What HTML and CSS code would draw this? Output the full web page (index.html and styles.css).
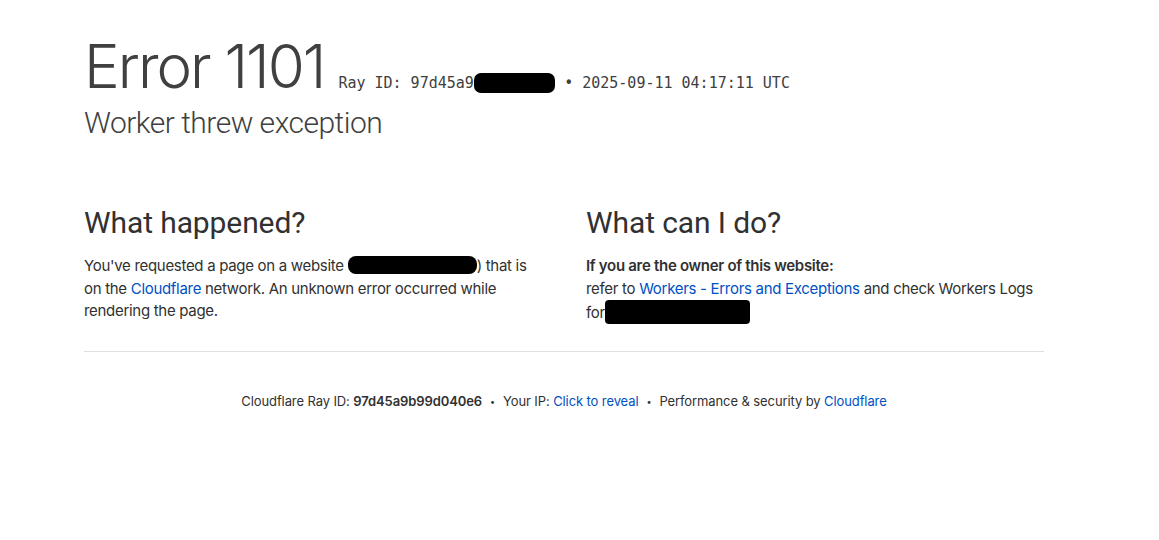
FILE: index.html
```html
<!DOCTYPE html>
<html lang="en">
<head>
<meta charset="utf-8">
<title>Worker threw exception | Cloudflare</title>
<link rel="stylesheet" href="styles.css">
</head>
<body>
<div class="wrapper">
  <header class="header">
    <h1 class="title">Error 1101</h1><span class="ray">Ray ID: 97d45a9<span class="redact-mono">b99d040e6</span> • 2025-09-11 04:17:11 UTC</span>
    <h2 class="subtitle">Worker threw exception</h2>
  </header>

  <section class="columns">
    <div class="col col-left">
      <h2 class="col-title">What happened?</h2>
      <p class="text">You've requested a page on a website <span class="redact redact-small" aria-label="redacted"></span>) that is on the <a class="link" href="#">Cloudflare</a> network. An unknown error occurred while rendering the page.</p>
    </div>
    <div class="col col-right">
      <h2 class="col-title">What can I do?</h2>
      <p class="text"><strong class="strong">If you are the owner of this website:</strong><br>refer to <a class="link" href="#">Workers - Errors and Exceptions</a> and check Workers Logs for<span class="redact redact-big" aria-label="redacted"></span></p>
    </div>
  </section>

  <footer class="footer">
    <p class="footer-text">Cloudflare Ray ID: <strong class="ray-bold">97d45a9b99d040e6</strong><span class="sep">•</span>Your IP: <a class="link" href="#">Click to reveal</a><span class="sep">•</span>Performance &amp; security by <a class="link" href="#">Cloudflare</a></p>
  </footer>
</div>
</body>
</html>
```

FILE: styles.css
```css
* { box-sizing: border-box; }

html, body {
  margin: 0;
  padding: 0;
  background: #ffffff;
}

body {
  font-family: Inter, Roboto, "Noto Sans", "Liberation Sans", sans-serif;
  color: #313131;
}

.wrapper {
  width: 960px;
  margin-left: 84px;
  padding-top: 29px;
}

.header {
  margin: 0;
}

.title {
  display: inline-block;
  margin: 0 14px 0 0;
  font-size: 60px;
  font-weight: 300;
  line-height: 75px;
  letter-spacing: -2px;
  color: #404040;
}

.ray {
  display: inline-block;
  font-family: "DejaVu Sans Mono", "Liberation Mono", monospace;
  font-size: 15px;
  color: #404040;
}

.redact-mono {
  background: #000;
  color: #000;
  border-radius: 7px;
  padding: 1px 0;
}

.subtitle {
  margin: 0;
  font-family: Roboto, Inter, sans-serif;
  font-size: 30px;
  font-weight: 300;
  line-height: 37.5px;
  letter-spacing: -0.5px;
  color: #404040;
}

.columns {
  display: grid;
  grid-template-columns: 480px 480px;
  margin-top: 62px;
  padding-bottom: 26px;
  border-bottom: 1px solid #e0e0e0;
}

.col-left { padding-right: 22px; }
.col-right { padding-left: 22px; }

.col-title {
  margin: 0 0 14px 0;
  font-family: Roboto, Inter, sans-serif;
  font-size: 30px;
  font-weight: 400;
  line-height: 37.5px;
  letter-spacing: -0.1px;
  color: #313131;
}

.text {
  margin: 0;
  font-size: 15px;
  line-height: 22.5px;
  letter-spacing: -0.3px;
  color: #313131;
}

.strong { font-weight: 600; }

.link {
  color: #0051c3;
  text-decoration: none;
}

.redact {
  display: inline-block;
  background: #000;
}

.redact-small {
  width: 129px;
  height: 18px;
  vertical-align: -3px;
  border-radius: 8px;
}

.redact-big {
  width: 145px;
  height: 24px;
  vertical-align: -6px;
  border-radius: 4px;
}

.footer {
  padding-top: 40px;
}

.footer-text {
  margin: 0;
  text-align: center;
  font-size: 13px;
  line-height: 19.5px;
  letter-spacing: -0.1px;
  color: #313131;
}

.ray-bold { font-weight: 600; }

.sep {
  display: inline-block;
  margin: 0 8px;
  font-size: 9px;
  vertical-align: 1px;
}
```
